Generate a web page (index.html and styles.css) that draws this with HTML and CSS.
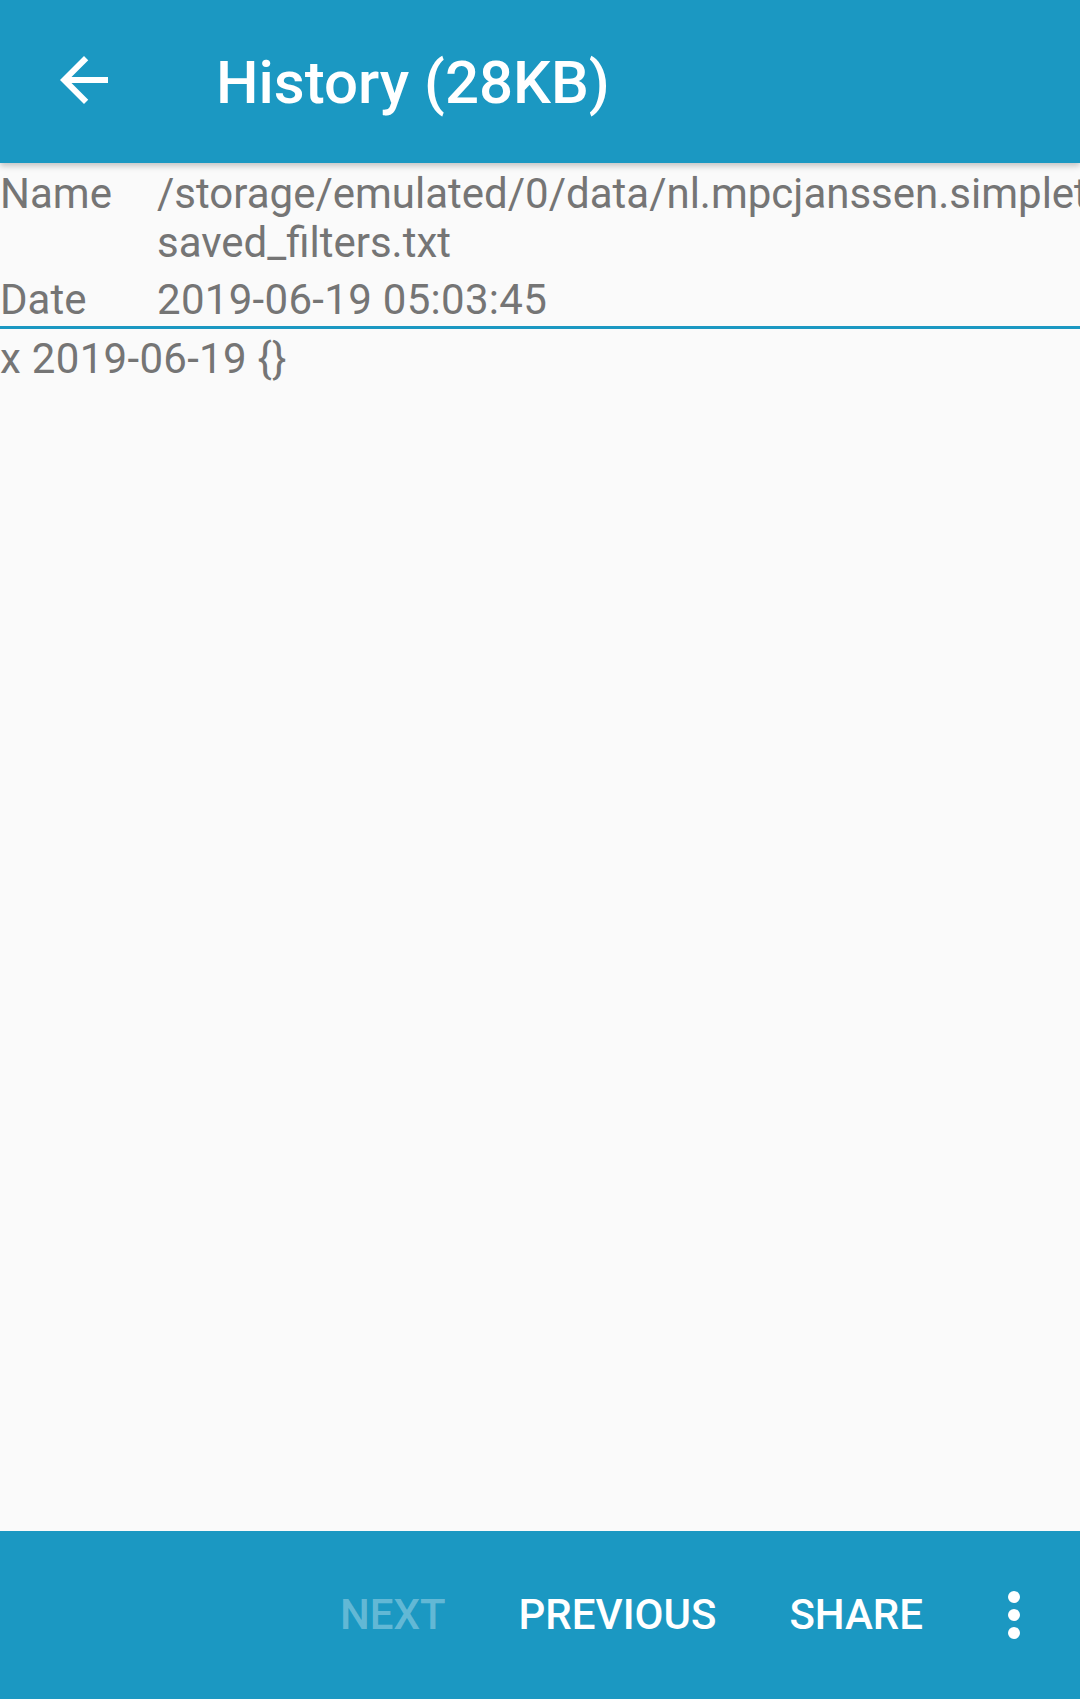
FILE: index.html
```html
<!DOCTYPE html>
<html>
<head>
<meta charset="utf-8">
<link rel="stylesheet" href="styles.css">
</head>
<body>
<div class="app">
  <header class="toolbar">
    <div class="nav-icon">
      <svg width="72" height="72" viewBox="0 0 24 24"><path fill="#fff" d="M20 11H7.83l5.59-5.59L12 4l-8 8 8 8 1.41-1.41L7.83 13H20v-2z"/></svg>
    </div>
    <div class="title">History (28KB)</div>
  </header>
  <main class="content">
    <div class="meta">
      <div class="label">Name</div>
      <div class="value">/storage/emulated/0/data/nl.mpcjanssen.simpletask/<br>saved_filters.txt</div>
      <div class="label">Date</div>
      <div class="value numeric">2019-06-19 05:03:45</div>
    </div>
    <div class="divider"></div>
    <div class="body-text numeric">x 2019-06-19 {}</div>
  </main>
  <footer class="actions">
    <span class="btn disabled">NEXT</span>
    <span class="btn">PREVIOUS</span>
    <span class="btn">SHARE</span>
    <span class="more">
      <svg width="12" height="48" viewBox="0 0 12 48"><circle cx="6" cy="6" r="6" fill="#fff"/><circle cx="6" cy="24" r="6" fill="#fff"/><circle cx="6" cy="42" r="6" fill="#fff"/></svg>
    </span>
  </footer>
</div>
</body>
</html>
```

FILE: styles.css
```css
html, body {
  margin: 0;
  padding: 0;
}
body {
  background: #fafafa;
  font-family: Roboto, "Liberation Sans", sans-serif;
  width: 1080px;
  height: 1699px;
  overflow: hidden;
}
.app {
  display: flex;
  flex-direction: column;
  height: 1699px;
}
.toolbar {
  flex: 0 0 163px;
  height: 163px;
  background: #1b98c2;
  display: flex;
  align-items: center;
  box-shadow: 0 3px 6px rgba(0, 0, 0, 0.22);
  position: relative;
  z-index: 2;
}
.nav-icon {
  width: 72px;
  height: 72px;
  margin-left: 48px;
  margin-top: -4px;
  display: flex;
}
.title {
  margin-left: 96px;
  color: #fff;
  font-size: 60px;
  font-weight: 500;
  line-height: 1;
  margin-top: 2px;
}
.content {
  flex: 1 1 auto;
  overflow: hidden;
  color: #757575;
  font-size: 42px;
  line-height: 49px;
}
.numeric {
  letter-spacing: 0.3px;
}
.meta {
  display: grid;
  grid-template-columns: 157px 1fr;
  row-gap: 8px;
  padding-top: 6px;
}
.value {
  white-space: nowrap;
  overflow: hidden;
}
.divider {
  height: 3px;
  background: #1b98c2;
  margin-top: 2px;
}
.body-text {
  margin-top: 5px;
  white-space: nowrap;
}
.actions {
  flex: 0 0 168px;
  height: 168px;
  background: #1b98c2;
  display: flex;
  align-items: center;
  justify-content: flex-end;
  gap: 73px;
  padding-right: 60px;
}
.btn {
  color: #fff;
  font-size: 42px;
  font-weight: 500;
  line-height: 1;
}
.btn.disabled {
  color: rgba(255, 255, 255, 0.32);
}
.more {
  display: flex;
  margin-left: 12px;
}
```
